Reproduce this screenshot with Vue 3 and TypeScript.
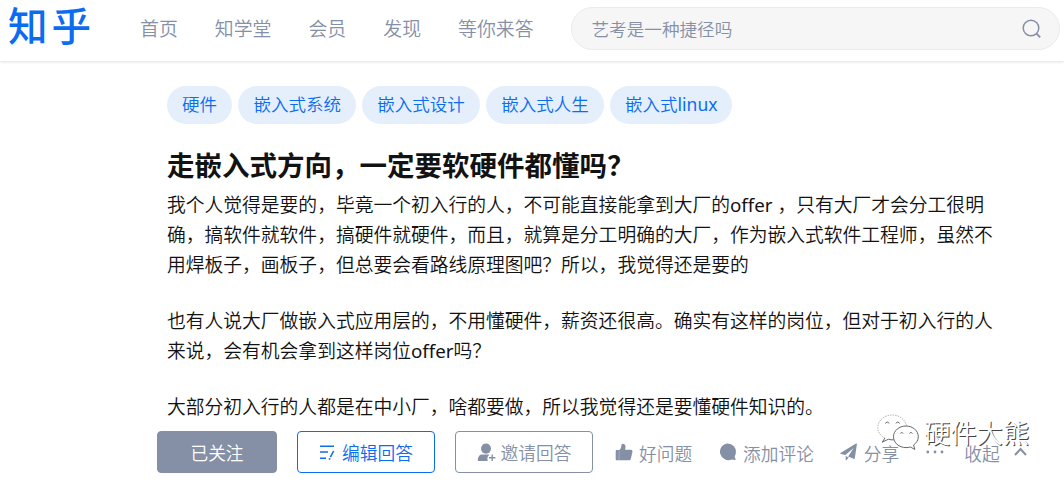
<script setup lang="ts">
const nav: string[] = ['首页', '知学堂', '会员', '发现', '等你来答']
const tags: string[] = ['硬件', '嵌入式系统', '嵌入式设计', '嵌入式人生', '嵌入式linux']
const paragraphs: string[][] = [
  [
    '我个人觉得是要的，毕竟一个初入行的人，不可能直接能拿到大厂的offer ，只有大厂才会分工很明',
    '确，搞软件就软件，搞硬件就硬件，而且，就算是分工明确的大厂，作为嵌入式软件工程师，虽然不',
    '用焊板子，画板子，但总要会看路线原理图吧？所以，我觉得还是要的',
  ],
  [
    '也有人说大厂做嵌入式应用层的，不用懂硬件，薪资还很高。确实有这样的岗位，但对于初入行的人',
    '来说，会有机会拿到这样岗位offer吗？',
  ],
  ['大部分初入行的人都是在中小厂，啥都要做，所以我觉得还是要懂硬件知识的。'],
]

// Latin words are set a little heavier than the Chinese text around them.
function runs(text: string): string[] {
  return text.split(/([a-z]+)/).filter((part) => part !== '')
}
function isLatin(part: string): boolean {
  return /^[a-z]/.test(part)
}
</script>

<template>
  <div class="page">
    <header class="header">
      <div class="logo">知乎</div>
      <nav class="nav">
        <a v-for="item in nav" :key="item">{{ item }}</a>
      </nav>
      <div class="search">
        <span>艺考是一种捷径吗</span>
        <svg width="20" height="20" viewBox="0 0 20 20" fill="none" stroke="#8590a6" stroke-width="1.5">
          <circle cx="9" cy="9" r="7.8" />
          <path d="M14.3 14.3L18.2 18.4" stroke-width="1.8" />
        </svg>
      </div>
    </header>

    <main class="question">
      <div class="tags">
        <span v-for="tag in tags" :key="tag" class="tag"><span v-for="part in runs(tag)" :key="part" :class="{ latin: isLatin(part) }">{{ part }}</span></span>
      </div>
      <h1>走嵌入式方向，一定要软硬件都懂吗？</h1>
      <div class="body">
        <p v-for="(lines, i) in paragraphs" :key="i">
          <span v-for="line in lines" :key="line" class="line"><span v-for="part in runs(line)" :key="part" :class="{ latin: isLatin(part) }">{{ part }}</span></span>
        </p>
      </div>
    </main>

    <footer class="actions">
      <button class="btn followed">已关注</button>
      <button class="btn edit">
        <svg width="17" height="17" viewBox="0 0 17 17" fill="none" stroke="#0f6fe8" stroke-width="1.4">
          <path d="M1 2.2H15M1 8H9M1 14.3H7" />
          <path d="M14.6 7L11.4 13.2M10.8 14.2L10.3 15.8" stroke-width="1.6" />
        </svg>
        <span>编辑回答</span>
      </button>
      <button class="btn invite">
        <svg width="19" height="19" viewBox="0 0 19 19" fill="#8590a6">
          <ellipse cx="9" cy="5.6" rx="5" ry="5.1" />
          <path d="M5 11.5H12.5L10.5 14V18H2C1 18 .5 17.2 .8 16.2C1.4 13.4 2.6 11.5 5 11.5Z" />
          <path d="M15.2 11.5V18M12 14.8H18.4" stroke="#8590a6" stroke-width="1.4" />
        </svg>
        <span>邀请回答</span>
      </button>
      <div class="act like">
        <svg width="18" height="19" viewBox="0 0 18 19" fill="#8590a6">
          <path d="M2 7.1H4.4C6.5 5.7 5.9 3.4 6.6 1.6C7 .5 8.8.4 9.7 1.5C11 3 10.5 5 10.1 6.7H15.7C17.2 6.7 17.7 7.8 17.4 9.2L15.8 15.8C15.5 16.8 14.9 17.3 13.9 17.3H2C1.2 17.3 .7 16.8 .7 16V8.5C.7 7.6 1.2 7.1 2 7.1Z" />
          <path d="M4.1 7.5V17.3" stroke="#c5cad5" stroke-width=".5" />
        </svg>
        <span>好问题</span>
      </div>
      <div class="act comment">
        <svg width="18" height="18" viewBox="0 0 18 18" fill="#8590a6">
          <path d="M8.8.4A8.3 8.3 0 0 1 16.9 9C16.9 10.8 16.4 12.3 15.6 13.5L16.6 16.4C16.7 16.9 16.5 17.2 16 17.1L12.9 16.4A8.4 8.4 0 1 1 8.8.4Z" />
        </svg>
        <span>添加评论</span>
      </div>
      <div class="act share">
        <svg width="18" height="18" viewBox="0 0 18 18" fill="#8590a6">
          <path d="M.5 10L16 .5C16.6.2 17 .5 16.9 1.2L14.8 15.2C14.7 15.9 14.2 16.1 13.6 15.8L8.2 13.4L13.6 5L5.4 12L1 11C.2 10.8 0 10.4.5 10ZM5.7 13.1L8.8 14.6L6.6 17.1C6 17.6 5.7 17.4 5.7 16.8Z" />
        </svg>
        <span>分享</span>
      </div>
      <svg class="more" width="18" height="4" viewBox="0 0 18 4" fill="#8590a6">
        <circle cx="1.8" cy="2" r="1.4" />
        <circle cx="9" cy="2" r="1.4" />
        <circle cx="16" cy="2" r="1.4" />
      </svg>
      <div class="act collapse">
        <span>收起</span>
        <svg width="13" height="10" viewBox="0 0 13 10" fill="none" stroke="#8590a6" stroke-width="2">
          <path d="M1 8L6.5 2L12 8" />
        </svg>
      </div>
    </footer>

    <div class="watermark">
      <svg width="43" height="38" viewBox="0 0 43 38" fill="#fff" stroke-width="1">
        <path d="M8 24.2C3.5 22 .8 18 .8 13.7C.8 6.8 7 1 15.2 1C22.4 1 28 5.4 29.5 11.5" stroke="#b5b5b5" stroke-dasharray="1.5 1" />
        <path d="M8 24L5.2 28.2L11.5 25.2C13.2 25.8 15 26 16.7 25.8" stroke="#666" />
        <path d="M29 12C35.8 12 41.3 16.8 41.3 22.7C41.3 26.2 39.5 28.9 36.6 31L37.8 35.4L33.4 33C32 33.4 30.5 33.6 29 33.6C22 33.6 16.5 28.8 16.5 22.7C16.5 16.8 22 12 29 12Z" stroke="#666" />
        <g fill="none" stroke="#666">
          <path d="M8.5 9.5A1.8 1.8 0 0 1 12 9.5M19 9.5A1.8 1.8 0 0 1 22.5 9.5M23.3 19.5A1.6 1.6 0 0 1 26.2 19.5M32.5 19.5A1.6 1.6 0 0 1 35.4 19.5" />
        </g>
      </svg>
      <span>硬件大熊</span>
    </div>
  </div>
</template>

<style>
body {
  background: #fff;
}
</style>

<style scoped>
.page {
  position: relative;
  width: 1064px;
  height: 480px;
  overflow: hidden;
  background: #fff;
  color: #121212;
  font-family: "Noto Sans", "Noto Sans CJK SC", sans-serif;
  font-weight: 350;
  text-spacing-trim: space-all;
}
.latin {
  font-weight: 400;
}
.header {
  display: flex;
  align-items: center;
  box-sizing: border-box;
  height: 61px;
  padding: 0 4px 4px 8px;
  box-shadow: 0 1px 3px rgba(18, 18, 18, 0.13);
}
.logo {
  width: 132px;
  margin-top: -6px;
  color: #0a6cf0;
  font-size: 39.5px;
  font-weight: 500;
  letter-spacing: 4px;
  line-height: 50px;
  white-space: nowrap;
}
.nav {
  display: flex;
  gap: 37px;
  width: 431px;
  color: #8590a6;
  font-size: 18.9px;
  line-height: 30px;
  white-space: nowrap;
}
.search {
  display: flex;
  flex: none;
  align-items: center;
  justify-content: space-between;
  box-sizing: border-box;
  width: 489px;
  height: 43px;
  padding: 0 17px 0 19.5px;
  border: 1px solid #ebebeb;
  border-radius: 22px;
  background: #f6f6f6;
  color: #8590a6;
  font-size: 17.6px;
}
.question {
  padding: 25px 0 0 167px;
}
.tags {
  display: flex;
  gap: 6.4px;
}
.tag {
  height: 38px;
  padding: 0 15px;
  border-radius: 19px;
  background: #e5effc;
  color: #0a6cf0;
  font-size: 17.5px;
  line-height: 37px;
}
h1 {
  margin: 22px 0 0;
  font-size: 27.5px;
  font-weight: 700;
  line-height: 40px;
}
.body {
  padding-top: 4px;
  font-size: 18.77px;
  line-height: 30px;
}
p {
  margin: 0 0 26px;
}
.line {
  display: block;
  white-space: pre;
}
.actions {
  display: flex;
  align-items: center;
  height: 42px;
  margin-top: -17px;
  padding-left: 157px;
  color: #8590a6;
  font-size: 17.7px;
  white-space: nowrap;
}
.btn {
  display: flex;
  align-items: center;
  justify-content: center;
  gap: 6px;
  box-sizing: border-box;
  width: 138px;
  height: 42px;
  margin: 0 20px 0 0;
  padding: 0;
  border: 1px solid #8590a6;
  border-radius: 4px;
  background: #fff;
  color: #8590a6;
  font: inherit;
}
.followed {
  width: 120px;
  background: #8590a6;
  color: #fff;
}
.edit {
  border-color: #0a6cf0;
  color: #0a6cf0;
}
.invite {
  gap: 5px;
}
.act {
  display: flex;
  align-items: center;
  gap: 6px;
}
.act span {
  padding-top: 1px;
}
.like {
  margin-left: 2px;
}
.comment {
  margin-left: 27px;
}
.share {
  margin-left: 26px;
}
.more {
  margin-left: 27px;
}
.collapse {
  gap: 14px;
  margin-left: 20px;
}
.watermark {
  position: absolute;
  top: 413px;
  left: 877px;
  display: flex;
  align-items: center;
  gap: 4px;
  color: #fff;
  font-size: 26.3px;
  line-height: 40px;
  text-shadow: 1px 1px 0 #444;
  white-space: nowrap;
}
</style>
